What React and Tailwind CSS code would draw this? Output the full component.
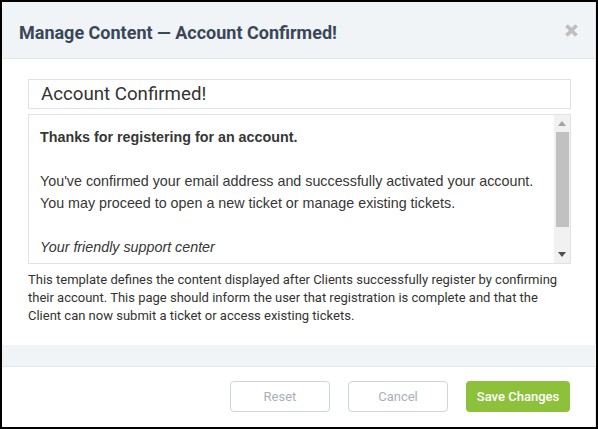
export default function App() {
  return (
    <div className="w-[598px] h-[429px] border-2 border-black bg-white flex flex-col overflow-hidden">
      {/* Header */}
      <div className="h-[57px] shrink-0 bg-[#f1f4f7] border-b border-[#e1e6eb] border-r border-r-[#e3e6ea] flex items-center justify-between pl-[17px] pr-[16px]">
        <h1 className="text-[18px] font-bold text-[#3a4758] font-['Roboto',sans-serif] mt-[4px]">
          Manage Content — Account Confirmed!
        </h1>
        <svg width="15" height="15" viewBox="0 0 15 15">
          <path d="M2.5 2.5 L12.5 12.5 M12.5 2.5 L2.5 12.5" stroke="#bfbfbf" strokeWidth="3.8" strokeLinecap="butt" />
        </svg>
      </div>

      {/* Body */}
      <div className="h-[286px] shrink-0 border-r border-[#e3e6ea] pt-[20px] pl-[26px] pr-[24px]">
        <div className="h-[30px] border border-[#dfe3e8] flex items-center pl-[12px]">
          <span className="text-[18.7px] text-[#333] font-['Roboto',sans-serif]">Account Confirmed!</span>
        </div>
        <div className="mt-[5px] h-[150px] border border-[#dfe3e8] flex">
          <div className="flex-1 pt-[11px] pl-[11px] text-[14.3px] leading-[22px] text-[#363636] font-['Liberation_Sans',Arial,sans-serif]">
            <p className="font-bold">Thanks for registering for an account.</p>
            <p>&nbsp;</p>
            <p>You've confirmed your email address and successfully activated your account.</p>
            <p>You may proceed to open a new ticket or manage existing tickets.</p>
            <p>&nbsp;</p>
            <p className="italic">Your friendly support center</p>
          </div>
          <div className="w-[16px] bg-[#f1f1f1] flex flex-col items-center">
            <div className="h-[17px] flex items-center justify-center">
              <svg width="8" height="5" viewBox="0 0 8 5">
                <path d="M0 5 L4 0 L8 5 Z" fill="#a3a3a3" />
              </svg>
            </div>
            <div className="w-[13px] h-[95px] bg-[#c1c1c1]" />
            <div className="flex-1" />
            <div className="h-[17px] flex items-center justify-center">
              <svg width="8" height="5" viewBox="0 0 8 5">
                <path d="M0 0 L8 0 L4 5 Z" fill="#505050" />
              </svg>
            </div>
          </div>
        </div>
        <p className="mt-[7px] text-[13px] leading-[18px] text-[#333] font-['Roboto',sans-serif]">
          This template defines the content displayed after Clients successfully register by confirming
          their account. This page should inform the user that registration is complete and that the
          Client can now submit a ticket or access existing tickets.
        </p>
      </div>

      {/* Gray band */}
      <div className="h-[22px] shrink-0 bg-[#f1f4f7] border-b border-[#e4e8ec]" />

      {/* Footer */}
      <div className="flex-1 border-r border-[#e3e6ea] flex items-start justify-end gap-[18px] pt-[14px] pr-[25px] font-['Roboto',sans-serif]">
        <button className="w-[100px] h-[31px] rounded-[4px] border border-[#cdd5dc] bg-white text-[13px] text-[#a9b0b7]">
          Reset
        </button>
        <button className="w-[100px] h-[31px] rounded-[4px] border border-[#cdd5dc] bg-white text-[13px] text-[#a9b0b7]">
          Cancel
        </button>
        <button className="w-[104px] h-[31px] rounded-[4px] bg-[#8dc13c] text-[13px] font-medium text-white">
          Save Changes
        </button>
      </div>
    </div>
  )
}
